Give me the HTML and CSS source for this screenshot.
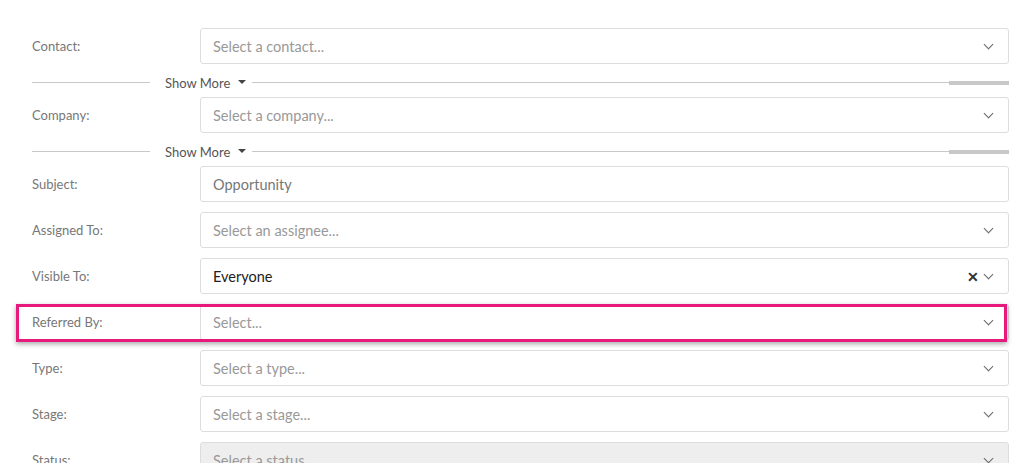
FILE: index.html
```html
<!DOCTYPE html>
<html lang="en">
<head>
  <meta charset="UTF-8">
  <title>Opportunity</title>
  <link rel="stylesheet" href="styles.css">
</head>
<body>
  <div class="form">
    <div class="row">
      <label>Contact:</label>
      <div class="select"><span class="placeholder">Select a contact...</span><span class="chev"></span></div>
    </div>
    <div class="more">
      <span class="line short"></span>
      <span class="more-text">Show More</span>
      <span class="caret"></span>
      <span class="line"></span>
      <span class="bar"></span>
    </div>
    <div class="row">
      <label>Company:</label>
      <div class="select"><span class="placeholder">Select a company...</span><span class="chev"></span></div>
    </div>
    <div class="more">
      <span class="line short"></span>
      <span class="more-text">Show More</span>
      <span class="caret"></span>
      <span class="line"></span>
      <span class="bar"></span>
    </div>
    <div class="row">
      <label>Subject:</label>
      <div class="select"><span class="value muted">Opportunity</span></div>
    </div>
    <div class="row spaced">
      <label>Assigned To:</label>
      <div class="select"><span class="placeholder">Select an assignee...</span><span class="chev"></span></div>
    </div>
    <div class="row spaced">
      <label>Visible To:</label>
      <div class="select"><span class="value">Everyone</span><span class="clear">&#x2715;</span><span class="chev"></span></div>
    </div>
    <div class="row spaced highlight">
      <label>Referred By:</label>
      <div class="select"><span class="placeholder">Select...</span><span class="chev"></span></div>
      <div class="mark"></div>
    </div>
    <div class="row spaced">
      <label>Type:</label>
      <div class="select"><span class="placeholder">Select a type...</span><span class="chev"></span></div>
    </div>
    <div class="row spaced">
      <label>Stage:</label>
      <div class="select"><span class="placeholder">Select a stage...</span><span class="chev"></span></div>
    </div>
    <div class="row spaced">
      <label>Status:</label>
      <div class="select disabled"><span class="placeholder">Select a status...</span><span class="chev"></span></div>
    </div>
  </div>
</body>
</html>
```

FILE: styles.css
```css
body {
  margin: 0;
  font-family: Lato, "Open Sans", sans-serif;
  background: #fff;
  overflow: hidden;
}
.form {
  padding: 28px 15px 0 32px;
}
.row {
  display: grid;
  grid-template-columns: 168px 1fr;
  align-items: center;
  position: relative;
}
.row.spaced {
  margin-top: 10px;
}
label {
  font-size: 13px;
  color: #777;
}
.select {
  height: 36px;
  box-sizing: border-box;
  border: 1px solid #ddd;
  border-radius: 3px;
  display: flex;
  align-items: center;
  padding: 0 14px 0 12px;
  background: #fff;
}
.select.disabled {
  background: #eee;
}
.placeholder {
  flex: 1;
  font-size: 14.5px;
  color: #999;
}
.value {
  flex: 1;
  font-size: 14.5px;
  color: #222;
}
.value.muted {
  color: #777;
}
.clear {
  font-size: 14px;
  font-weight: bold;
  color: #333;
  margin-right: 6px;
}
.chev {
  width: 6px;
  height: 6px;
  border-right: 1.5px solid #666;
  border-bottom: 1.5px solid #666;
  transform: rotate(45deg);
  margin: -4px 2px 0 0;
}
.more {
  height: 33px;
  box-sizing: border-box;
  padding-top: 4px;
  display: flex;
  align-items: center;
}
.line {
  flex: 1;
  height: 1px;
  background: #c8c8c8;
}
.line.short {
  flex: none;
  width: 118px;
}
.more-text {
  font-size: 13px;
  color: #555;
  margin: 0 8px 0 15px;
}
.caret {
  width: 0;
  height: 0;
  border-left: 4px solid transparent;
  border-right: 4px solid transparent;
  border-top: 4px solid #444;
  margin: -2px 6px 0 0;
}
.bar {
  width: 60px;
  height: 4px;
  background: #c8c8c8;
}
.mark {
  position: absolute;
  left: -16px;
  right: 2px;
  top: 0;
  bottom: -2px;
  border: 3px solid #e8197d;
  box-shadow: 0 2px 5px rgba(0, 0, 0, 0.35);
  pointer-events: none;
}
```
